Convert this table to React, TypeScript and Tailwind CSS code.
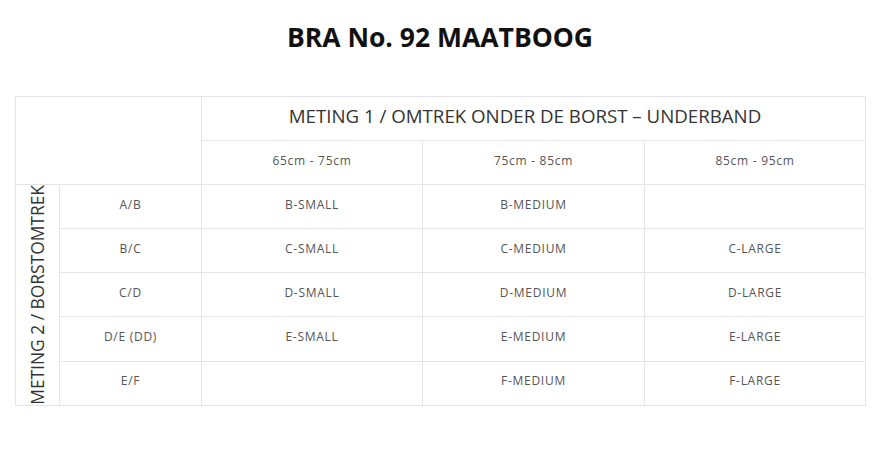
const rows = [
  { cup: 'A/B', sizes: ['B-SMALL', 'B-MEDIUM', ''] },
  { cup: 'B/C', sizes: ['C-SMALL', 'C-MEDIUM', 'C-LARGE'] },
  { cup: 'C/D', sizes: ['D-SMALL', 'D-MEDIUM', 'D-LARGE'] },
  { cup: 'D/E (DD)', sizes: ['E-SMALL', 'E-MEDIUM', 'E-LARGE'] },
  { cup: 'E/F', sizes: ['', 'F-MEDIUM', 'F-LARGE'] },
];

const ranges = ['65cm - 75cm', '75cm - 85cm', '85cm - 95cm'];

export default function App() {
  const cell = 'border border-[#e4e4ea] h-[44px] p-0 text-center align-middle';
  const small = 'pb-[4px] text-[12px] tracking-[0.06em] text-[#555]';
  return (
    <div className="w-[880px] h-[467px] bg-white font-['Open_Sans',sans-serif]">
      <h1 className="pt-[17px] text-center text-[26.5px] font-bold leading-[40px] text-[#111]">
        BRA No. 92 MAATBOOG
      </h1>

      <div className="mt-[39px] px-[15px]">
        <table className="w-[850px] table-fixed border-collapse">
          <colgroup>
            <col className="w-[44px]" />
            <col className="w-[142px]" />
            <col className="w-[221px]" />
            <col className="w-[222px]" />
            <col className="w-[221px]" />
          </colgroup>
          <tbody>
            <tr>
              <td className={cell} colSpan={2} rowSpan={2}></td>
              <td className={`${cell} pb-[5px] pr-[17px] text-[18.7px] text-[#333]`} colSpan={3}>
                METING 1 / OMTREK ONDER DE BORST – UNDERBAND
              </td>
            </tr>
            <tr>
              {ranges.map((r) => (
                <td key={r} className={`${cell} ${small}`}>{r}</td>
              ))}
            </tr>
            {rows.map((row, i) => (
              <tr key={row.cup}>
                {i === 0 && (
                  <td className={`${cell} text-[17.4px] text-[#333]`} rowSpan={5}>
                    <div className="flex h-full items-center justify-center">
                      <span className="rotate-180 whitespace-nowrap leading-none [writing-mode:vertical-rl]">
                        METING 2 / BORSTOMTREK
                      </span>
                    </div>
                  </td>
                )}
                <td className={`${cell} ${small}`}>{row.cup}</td>
                {row.sizes.map((s, j) => (
                  <td key={j} className={`${cell} ${small}`}>{s}</td>
                ))}
              </tr>
            ))}
          </tbody>
        </table>
      </div>
    </div>
  );
}
